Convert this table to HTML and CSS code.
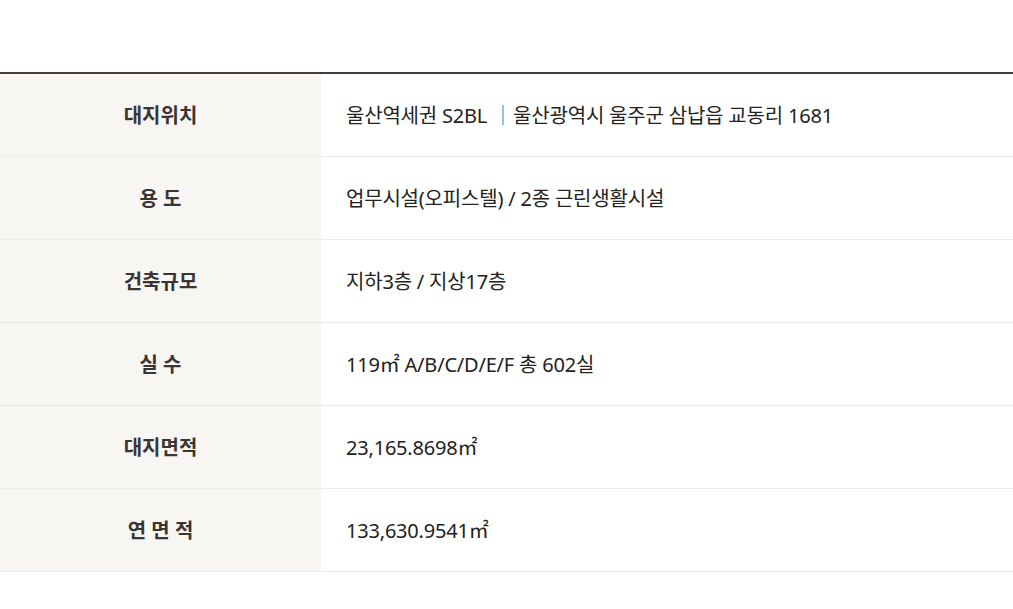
FILE: index.html
```html
<!DOCTYPE html>
<html lang="ko">
<head>
<meta charset="utf-8">
<link rel="stylesheet" href="styles.css">
</head>
<body>
<div class="page">
  <div class="info">
    <div class="row">
      <div class="label">대지위치</div>
      <div class="value">울산역세권 S2BL<span class="sep"></span>울산광역시 울주군 삼납읍 교동리 1681</div>
    </div>
    <div class="row">
      <div class="label">용 도</div>
      <div class="value">업무시설(오피스텔) / 2종 근린생활시설</div>
    </div>
    <div class="row">
      <div class="label">건축규모</div>
      <div class="value">지하3층 / 지상17층</div>
    </div>
    <div class="row">
      <div class="label">실 수</div>
      <div class="value">119㎡ A/B/C/D/E/F 총 602실</div>
    </div>
    <div class="row">
      <div class="label">대지면적</div>
      <div class="value">23,165.8698㎡</div>
    </div>
    <div class="row">
      <div class="label">연 면 적</div>
      <div class="value">133,630.9541㎡</div>
    </div>
  </div>
</div>
</body>
</html>
```
FILE: styles.css
```css
html, body {
  margin: 0;
  padding: 0;
  background: #fff;
}
.page {
  padding-top: 72px;
  font-family: "Noto Sans", "Noto Sans CJK KR", sans-serif;
}
.info {
  border-top: 2px solid #463d39;
}
.row {
  display: flex;
  height: 82px;
  border-bottom: 1px solid #ebebeb;
}
.label {
  width: 321px;
  flex: none;
  background: #f8f6f3;
  display: flex;
  align-items: center;
  justify-content: center;
  font-size: 20px;
  font-weight: 700;
  color: #3a3533;
  padding-bottom: 1px;
}
.value {
  flex: 1;
  display: flex;
  align-items: center;
  padding-left: 25px;
  padding-bottom: 1px;
  font-size: 20px;
  color: #222;
  letter-spacing: -0.2px;
}
.sep {
  display: inline-block;
  width: 2px;
  height: 20px;
  background: #8ec0ea;
  margin: 0 9px 0 15px;
}
```
